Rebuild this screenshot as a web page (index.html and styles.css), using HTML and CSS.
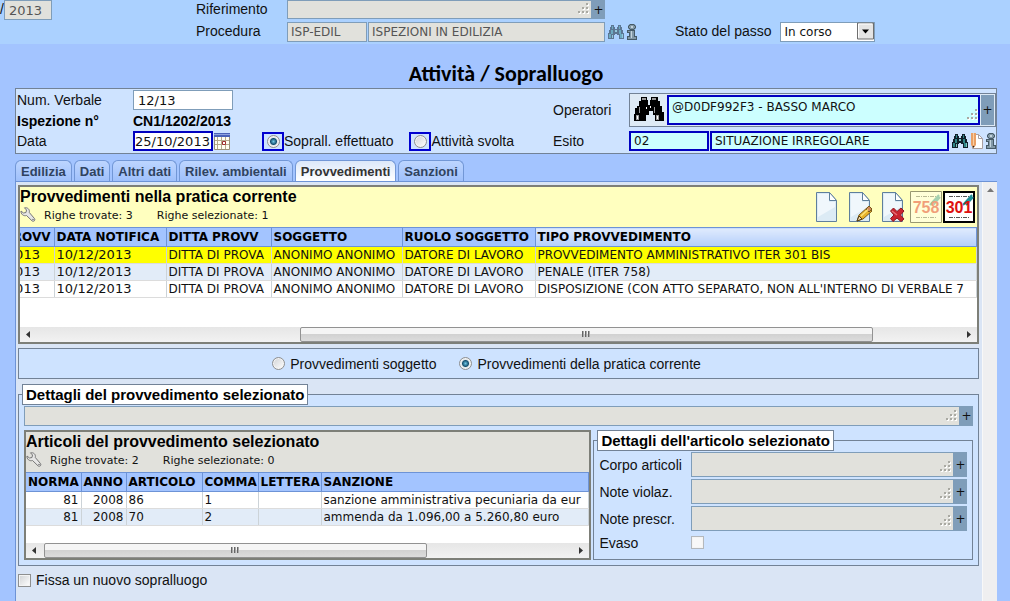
FILE: index.html
```html
<!DOCTYPE html>
<html lang="it">
<head>
<meta charset="utf-8">
<title>Attività / Sopralluogo</title>
<link rel="stylesheet" href="styles.css">
</head>
<body>
<svg class="defs" aria-hidden="true">
  <symbol id="binoculars" viewBox="0 0 16 16">
    <path d="M3 1h3v2h1v2h2V3h1V1h3v2h1v3h1v3h1v6h-5v-4H9v-1H7v1H6v4H0V9h1V6h1V3h1z" fill="#10202a"/>
    <path d="M4 2h1v3H4zM11 2h1v3h-1zM3 6h2v4H3zM11 6h2v4h-2zM1 10h2v4H1zM12 10h2v4h-2z" fill="#2f8587"/>
    <path d="M4 11h1v3H4zM14 10h1v4h-1zM7 6h2v2H7z" fill="#7dc4bf"/>
  </symbol>
  <symbol id="binoculars-big" viewBox="0 0 30 26">
    <path d="M7 0h6v3h1v5h2V3h1V0h7v4h2v5h2v6h2v9h-9v-6h-2v-4h-4v4h-3v6H0v-7h1v-6h2V9h2V4h2z" fill="#000"/>
    <path d="M8 1h4v2H8zM18 1h4v2h-4zM5 10h1v6H5zM20 10h1v6h-1zM2 18h3v5H2zM22 18h3v5h-3z" fill="#999"/>
    <path d="M3 19h1v3H3zM23 19h1v3h-1zM12 10h1v2h-1zM16 9h1v2h-1z" fill="#fff"/>
  </symbol>
  <symbol id="info" viewBox="0 0 10 16">
    <path d="M3 0h4l2 2v2L7 6h1v6h2v4H0v-4h2V9H0V6h3L1 4V2z" fill="#465a66"/>
    <path d="M3 1h4v1h1v2H7v1H3V4H2V2h1zM1 7h6v6h2v2H1v-2h2V8H1z" fill="#8298a6"/>
    <path d="M4 2h2v2H4zM4 7h1v7H4z" fill="#c3d3dc"/>
  </symbol>
  <symbol id="wrench" viewBox="0 0 16 16">
    <path d="M1 4l2.500 2L6 5.500 6.500 3 4.500.8c3-.6 5.500 1.500 4.800 4.700l5.300 6.200c1 1.500-.8 3.300-2.400 2.300L6.500 8.500C3.500 9.500.6 7 1 4z" fill="#e6e6e6" stroke="#777"/>
    <circle cx="13" cy="12.500" r=".8" fill="#777"/>
  </symbol>
  <symbol id="page" viewBox="0 0 24 32">
    <path d="M1.500 1.500h13l7 8v21h-20z" fill="#dcebf5" stroke="#5f7f9c"/>
    <path d="M3 3h11v8h6v5L3 26z" fill="#f0f7fc"/>
    <path d="M14.500 1.500v8h7z" fill="#fff" stroke="#5f7f9c"/>
  </symbol>
  <symbol id="grip" viewBox="0 0 12 12">
    <path d="M9 0h2v2H9zM5 4h2v2H5zM9 4h2v2H9zM1 8h2v2H1zM5 8h2v2H5zM9 8h2v2H9z" fill="#a9a9a2"/>
    <path d="M11 1h1v2h-2V2h1zM7 5h1v2H6V6h1zM11 5h1v2h-2V6h1zM3 9h1v2H2v-1h1zM7 9h1v2H6v-1h1zM11 9h1v2h-2v-1h1z" fill="#fff"/>
  </symbol>
  <symbol id="bars" viewBox="0 0 9 7">
    <path d="M0 0h2v6H0zM3 0h2v6H3zM6 0h2v6H6z" fill="#aaa"/>
    <path d="M0 0h1v6H0zM3 0h1v6H3zM6 0h1v6H6z" fill="#666"/>
  </symbol>
</svg>

<header class="top">
  <div class="year"><span>/</span><input class="field off num" aria-label="Anno" value="2013" readonly></div>
  <div class="top-grid">
    <label for="rif">Riferimento</label>
    <div class="memo"><textarea id="rif" class="off" readonly></textarea><svg class="grip"><use href="#grip"/></svg><button class="plus">+</button></div>
    <span></span>
    <label for="proc">Procedura</label>
    <div class="pair"><input id="proc" class="field off code" value="ISP-EDIL" readonly><input class="field off" aria-label="Descrizione procedura" value="ISPEZIONI IN EDILIZIA" readonly></div>
    <div class="icons faded"><button class="icon pale" aria-label="Cerca"><svg width="16" height="16"><use href="#binoculars"/></svg></button><button class="icon" aria-label="Info"><svg width="10" height="16"><use href="#info"/></svg></button></div>
  </div>
  <div class="step"><label for="stato">Stato del passo</label>
    <span class="select"><select id="stato"><option>In corso</option></select><svg viewBox="0 0 17 17" aria-hidden="true"><path d="M.5.500h16v16H.5z" fill="#e4e4e4" stroke="#6f6f6f"/><path d="M1.500 15V1.500H15" fill="none" stroke="#fff"/><path d="M5 7h7l-3.500 4z"/></svg></span>
  </div>
</header>

<main>
  <h1>Attività / Sopralluogo</h1>

  <section class="panel record">
    <div class="rec-left">
      <label for="num">Num. Verbale</label><input id="num" class="field num w100" value="12/13">
      <b>Ispezione n°</b><b>CN1/1202/2013</b>
      <label for="data">Data</label>
      <div class="row">
        <input id="data" class="field num must date w80" value="25/10/2013">
        <button class="icon cal" aria-label="Calendario"><svg width="16" height="17" viewBox="0 0 16 17"><path d="M.5 2.500h15v14H.5z" fill="#fffef2" stroke="#9a8f78"/><path d="M0 0h16v4H0z" fill="#4a62b8"/><path d="M0 1h16v1H0z" fill="#8fa2e0"/><path d="M3.500 4v12M7.500 4v12M11.500 4v12M1 7.500h14M1 11.500h14" stroke="#b5a98c"/><path d="M8.500 8.500h3v3h-3z" fill="#fff" stroke="#a03030"/></svg></button>
        <span class="choice first"><span class="ring"><input type="radio" name="att" id="r1" checked></span><label for="r1">Soprall. effettuato</label></span>
        <span class="choice"><span class="ring"><input type="radio" name="att" id="r2"></span><label for="r2">Attività svolta</label></span>
      </div>
    </div>
    <div class="rec-right">
      <label for="oper">Operatori</label>
      <div class="operators">
        <button class="icon" aria-label="Cerca operatori"><svg width="32" height="26"><use href="#binoculars-big"/></svg></button>
        <div class="memo tall"><textarea id="oper" class="must cyan" readonly>@D0DF992F3 - BASSO MARCO</textarea><svg class="grip"><use href="#grip"/></svg><button class="plus">+</button></div>
      </div>
      <label for="esito">Esito</label>
      <div class="row outcome">
        <input id="esito" class="field must cyan w80" value="02"><input class="field must cyan grow" aria-label="Descrizione esito" value="SITUAZIONE IRREGOLARE">
        <div class="icons"><button class="icon" aria-label="Cerca esito"><svg width="16" height="16"><use href="#binoculars"/></svg></button><button class="icon" aria-label="Modifica"><svg width="12" height="16" viewBox="0 0 12 16"><path d="M1.500 1.500h6l4 4v10h-10z" fill="#fff" stroke="#a99fa0"/><path d="M7.500 1.500v4h4" fill="none" stroke="#a99fa0"/><path d="M0 0h5v12l-2.500 3L0 12z" fill="#e9a066"/><path d="M2 0h1v12H2z" fill="#f7cfa4"/><path d="M1.500 13h2l-1 2z" fill="#222"/></svg></button><button class="icon" aria-label="Info esito"><svg width="10" height="16"><use href="#info"/></svg></button></div>
      </div>
    </div>
  </section>

  <nav class="tabs" aria-label="Sezioni">
    <button>Edilizia</button><button>Dati</button><button>Altri dati</button><button>Rilev. ambientali</button><button class="active">Provvedimenti</button><button>Sanzioni</button>
  </nav>

  <div class="sheet">
    <div class="content">
      <section class="grid">
        <div class="caption yellow">
          <div>
            <h2>Provvedimenti nella pratica corrente</h2>
            <p><svg width="16" height="16"><use href="#wrench"/></svg><span>Righe trovate: 3</span><span>Righe selezionate: 1</span></p>
          </div>
          <div class="tools">
            <button class="icon" aria-label="Nuovo"><svg width="24" height="32"><use href="#page"/></svg></button>
            <button class="icon" aria-label="Modifica"><svg width="24" height="32" viewBox="0 0 24 32"><use href="#page" width="24" height="32"/><path d="M9 30l2-6 9-8 4 4-9 8z" fill="#e8b32c" stroke="#7c5a18"/><path d="M9 30l2-5 3 3z" fill="#f5dfb0" stroke="#4f3a14"/><path d="M18 18l3-3 3 3-3 3z" fill="#d08a5c" stroke="#7c5a18"/><path d="M13 25l7-6.500" stroke="#fbe27d" stroke-width="1.500"/></svg></button>
            <button class="icon" aria-label="Elimina"><svg width="24" height="32" viewBox="0 0 24 32"><use href="#page" width="24" height="32"/><path d="M9.500 20l3-3 3.500 3.500 4-3.500 3 3-3.500 4 3.500 4-3 2.500-4-3.500-4 3.500-2.500-3 3.500-3.500z" fill="#c9232f" stroke="#8e1620"/><path d="M11 20l5 4" stroke="#e67078" stroke-width="1.500"/></svg></button>
            <button class="icon stamp dim" aria-label="Iter 758"><svg width="32" height="32" viewBox="0 0 32 32"><path d="M.5.500h31v31H.5z" fill="#fff" stroke="#000"/><path d="M6 5.500h20M6 26.500h20" stroke="#555" stroke-dasharray="4 1 1 1"/><path d="M20 14l9-10M23 14l7-8" stroke="#1f8f98" stroke-width="2"/><text x="16" y="22" text-anchor="middle" class="stamp-text">758</text></svg></button>
            <button class="icon stamp" aria-label="Iter 301"><svg width="32" height="32" viewBox="0 0 32 32"><path d="M1 1h30v30H1z" fill="#fff" stroke="#000" stroke-width="2"/><path d="M6 5.500h20M6 26.500h20" stroke="#555" stroke-dasharray="4 1 1 1"/><path d="M20 14l9-10M23 14l7-8" stroke="#1f8f98" stroke-width="2"/><text x="16" y="22" text-anchor="middle" class="stamp-text">301</text></svg></button>
          </div>
        </div>
        <div class="viewport">
          <table class="measures">
            <colgroup><col class="c-prov"><col class="c-noti"><col class="c-firm"><col class="c-subj"><col class="c-role"><col></colgroup>
            <thead><tr><th>DATA PROVV</th><th>DATA NOTIFICA</th><th>DITTA PROVV</th><th>SOGGETTO</th><th>RUOLO SOGGETTO</th><th class="sorted">TIPO PROVVEDIMENTO</th></tr></thead>
            <tbody>
              <tr class="picked"><td class="num">10/12/2013</td><td class="num">10/12/2013</td><td>DITTA DI PROVA</td><td>ANONIMO ANONIMO</td><td>DATORE DI LAVORO</td><td>PROVVEDIMENTO AMMINISTRATIVO ITER 301 BIS</td></tr>
              <tr><td class="num">10/12/2013</td><td class="num">10/12/2013</td><td>DITTA DI PROVA</td><td>ANONIMO ANONIMO</td><td>DATORE DI LAVORO</td><td>PENALE (ITER 758)</td></tr>
              <tr><td class="num">10/12/2013</td><td class="num">10/12/2013</td><td>DITTA DI PROVA</td><td>ANONIMO ANONIMO</td><td>DATORE DI LAVORO</td><td>DISPOSIZIONE (CON ATTO SEPARATO, NON ALL'INTERNO DI VERBALE 7</td></tr>
            </tbody>
          </table>
        </div>
        <div class="hbar far">
          <svg width="16" height="15" viewBox="0 0 16 15"><path d="M10 4v7L6 7.500z" fill="#333"/></svg>
          <div class="track"><span class="thumb"><svg width="9" height="7"><use href="#bars"/></svg></span></div>
          <svg width="16" height="15" viewBox="0 0 16 15"><path d="M6 4v7l4-3.500z" fill="#333"/></svg>
        </div>
      </section>

      <section class="panel scope">
        <span class="choice"><input type="radio" name="scope" id="s1"><label for="s1">Provvedimenti soggetto</label></span>
        <span class="choice"><input type="radio" name="scope" id="s2" checked><label for="s2">Provvedimenti della pratica corrente</label></span>
      </section>

      <fieldset class="details">
        <legend>Dettagli del provvedimento selezionato</legend>
        <div class="memo"><textarea class="off" aria-label="Dettagli del provvedimento" readonly></textarea><svg class="grip"><use href="#grip"/></svg><button class="plus">+</button></div>
        <div class="split">
          <section class="grid">
            <div class="caption">
              <div>
                <h2>Articoli del provvedimento selezionato</h2>
                <p class="wide"><svg width="16" height="16"><use href="#wrench"/></svg><span>Righe trovate: 2</span><span>Righe selezionate: 0</span></p>
              </div>
            </div>
            <div class="viewport">
              <table class="articles">
                <colgroup><col class="c-rule"><col class="c-year"><col class="c-art"><col class="c-comma"><col class="c-let"><col></colgroup>
                <thead><tr><th>NORMA</th><th>ANNO</th><th>ARTICOLO</th><th>COMMA</th><th>LETTERA</th><th>SANZIONE</th></tr></thead>
                <tbody>
                  <tr><td class="right">81</td><td class="right">2008</td><td>86</td><td>1</td><td></td><td>sanzione amministrativa pecuniaria da eur</td></tr>
                  <tr><td class="right">81</td><td class="right">2008</td><td>70</td><td>2</td><td></td><td>ammenda da 1.096,00 a 5.260,80 euro</td></tr>
                </tbody>
              </table>
            </div>
            <div class="hbar near">
              <svg width="16" height="15" viewBox="0 0 16 15"><path d="M10 4v7L6 7.500z" fill="#333"/></svg>
              <div class="track"><span class="thumb"><svg width="9" height="7"><use href="#bars"/></svg></span></div>
              <svg width="16" height="15" viewBox="0 0 16 15"><path d="M6 4v7l4-3.500z" fill="#333"/></svg>
            </div>
          </section>
          <fieldset class="article">
            <legend>Dettagli dell'articolo selezionato</legend>
            <div class="form">
              <label for="corpo">Corpo articoli</label><div class="memo mid"><textarea id="corpo" class="off" readonly></textarea><svg class="grip"><use href="#grip"/></svg><button class="plus">+</button></div>
              <label for="viol">Note violaz.</label><div class="memo mid"><textarea id="viol" class="off" readonly></textarea><svg class="grip"><use href="#grip"/></svg><button class="plus">+</button></div>
              <label for="presc">Note prescr.</label><div class="memo mid"><textarea id="presc" class="off" readonly></textarea><svg class="grip"><use href="#grip"/></svg><button class="plus">+</button></div>
              <label for="evaso">Evaso</label><input type="checkbox" class="pale-box" id="evaso">
            </div>
          </fieldset>
        </div>
      </fieldset>

      <div class="choice again"><input type="checkbox" id="fissa"><label for="fissa">Fissa un nuovo sopralluogo</label></div>
    </div>
    <div class="vbar" aria-hidden="true"><svg width="16" height="16" viewBox="0 0 16 16"><path d="M4 10h7L7.500 6z" fill="#777"/></svg></div>
  </div>
</main>
</body>
</html>
```
FILE: styles.css
```css
* { box-sizing: border-box; }

body {
  margin: 0;
  height: 100vh;
  overflow: hidden;
  display: flex;
  flex-direction: column;
  background: #a3c4ff;
  color: #111;
  font: 14px/18px "Liberation Sans", Arial, sans-serif;
}

.defs { position: absolute; width: 0; height: 0; }
svg { display: block; flex: none; }

button, input, textarea, select { margin: 0; color: #111; font: 12px/16px "DejaVu Sans", Verdana, sans-serif; }
.icon { display: block; padding: 0; border: 0; background: none; }

/* fields */
.field {
  height: 20px;
  min-width: 0;
  padding: 0 4px;
  border: 1px solid #7f9db9;
  border-radius: 0;
  background: #fff;
}
.field.off, textarea.off { background: #e1e1dc; color: #555; }
.field.num, td.num { font-size: 13px; }
.must { border: 2px solid #0000c0; }
.field.must { padding: 0 3px; }
.field.date { padding: 0; }
.field.cyan, textarea.cyan { background: #ccffff; }
.w80 { width: 80px; }
.w100 { width: 100px; }
.grow { flex: 1; }
.row { display: flex; align-items: center; }

.memo { position: relative; display: flex; height: 20px; }
.memo textarea {
  flex: 1;
  min-width: 0;
  padding: 2px 3px;
  border: 1px solid #7f9db9;
  resize: none;
  overflow: hidden;
}
.memo textarea.must { border: 2px solid #0000c0; }
.memo .grip { position: absolute; right: 16px; bottom: 4px; width: 12px; height: 12px; }
.plus { width: 13px; padding: 0; border: 0; background: #7f9db9; text-align: center; }
.memo.tall { flex: 1; height: 30px; gap: 1px; }
.memo.mid { height: 25px; }

/* choices */
input[type="radio"], input[type="checkbox"] {
  appearance: none;
  flex: none;
  width: 13px;
  height: 13px;
  border: 1px solid #8e8f8f;
  background: linear-gradient(135deg, #d0d2d4, #fff);
  box-shadow: inset 0 0 0 1px #f4f4f4;
}
input[type="radio"] { border-radius: 50%; }
input[type="radio"]:checked {
  background: radial-gradient(circle, #6fc7e6 0, #14506f 3px, #dfe6ea 4px);
}
input.pale-box { border-color: #b4b8bc; background: #f8f8f8; }
.choice { display: flex; align-items: center; }
.ring {
  display: grid;
  place-items: center;
  width: 22px;
  height: 19px;
  border: 2px solid #0000d0;
}

/* top strip */
.top { display: flex; height: 44px; flex: none; background: #abd1ff; }
.year { display: flex; width: 196px; }
.year span { width: 4px; line-height: 18px; }
.year .field { width: 48px; }
.top-grid {
  display: grid;
  grid-template-columns: 91px 318px 32px;
  grid-template-rows: 19px 20px;
  gap: 3px 0;
}
.top-grid .memo { height: 19px; }
.pair { display: flex; gap: 1px; }
.pair .field { flex: 1; padding: 0 3px; }
.pair .code { flex: none; width: 80px; }
.icons { display: flex; align-items: center; gap: 3px; }
.icons.faded { margin-left: 3px; }
.pale { opacity: 0.5; }
.step { display: flex; align-items: flex-start; gap: 8px; margin-left: 38px; padding-top: 21px; line-height: 20px; }
.select { position: relative; display: block; width: 95px; }
.select select {
  appearance: none;
  width: 100%;
  height: 20px;
  padding: 0 4px;
  border: 1px solid #7f9db9;
  border-radius: 0;
  background: #fff;
}
.select svg { position: absolute; top: 1px; right: 1px; width: 17px; height: 18px; pointer-events: none; }

/* main area */
main { flex: 1; min-height: 0; display: flex; flex-direction: column; padding: 0 13px 0 15px; }
h1 {
  margin: 18px 0 2px;
  text-align: center;
  color: #000;
  font: bold 22px/24px Carlito, Calibri, Lato, sans-serif;
}
.panel { border: 1px solid #728296; background: #cee3ff; }
.record { display: flex; justify-content: space-between; padding: 1px 0 2px 1px; }
.rec-left { display: grid; grid-template-columns: 116px auto; grid-template-rows: 20px 21px 20px; align-items: center; color: #111; }
.rec-left b { color: #000; }
.cal { margin-left: 1px; }
.choice.first { margin: 0 16px 0 32px; }
.rec-right {
  display: grid;
  grid-template-columns: 76px 367px;
  grid-template-rows: 34px 20px;
  row-gap: 4px;
  align-items: center;
  margin-top: 3px;
}
.operators { display: flex; align-items: center; gap: 2px; height: 34px; padding: 0 1px 0 3px; border: 1px solid #728296; background: #deeaf5; }
.outcome { gap: 1px; }
.outcome .icons { margin-left: 2px; }

/* tabs */
.tabs { display: flex; gap: 2px; margin-top: 6px; }
.tabs button {
  height: 21px;
  padding: 2px 5px 0;
  border: 1px solid #7297d6;
  border-bottom: 0;
  border-radius: 6px 6px 0 0;
  background: linear-gradient(#bdd5ff, #9fc0fb);
  color: #30435f;
  font: bold 13px/18px "Liberation Sans", Arial, sans-serif;
}
.tabs .active { background: linear-gradient(#dce8fa, #fff); color: #333; }

/* sheet */
.sheet { flex: 1; min-height: 0; display: flex; border: solid #6d93d6; border-width: 1px 0 0 1px; background: #dae5f5; }
.content { flex: 1; min-width: 0; padding: 3px 3px 0 2px; }
.vbar { width: 15px; background: #efeff0; border-left: 1px solid #f8f8f8; }

.grid { border: 2px solid #7d7f78; background: #fff; min-width: 0; }
.caption { display: flex; justify-content: space-between; height: 40px; background: #e1e1dc; }
.caption.yellow { background: #ffffbf; }
h2 { margin: 0; color: #000; font: bold 16px/20px "Liberation Sans", Arial, sans-serif; }
.caption p { display: flex; gap: 24px; margin: 0; font: 11px/18px "DejaVu Sans", Verdana, sans-serif; }
.caption svg + span { margin-left: -16px; }
.caption .wide svg + span { margin-left: -16px; }
.tools { display: flex; align-items: center; gap: 9px; padding-right: 2px; }
.tools .stamp { margin-left: -4px; }
.tools .stamp + .stamp { margin-left: -8px; }
.dim { opacity: 0.4; }
.stamp-text { fill: #dd1010; font: bold 16px "Liberation Sans", Arial, sans-serif; }

.viewport { overflow: hidden; }
table { border-collapse: collapse; table-layout: fixed; width: 100%; font: 12px/16px "DejaVu Sans", Verdana, sans-serif; }
th, td { height: 17px; padding: 0 2px; overflow: hidden; white-space: nowrap; text-align: left; border-right: 1px solid #ccd3d8; }
th { height: 19px; color: #000; background: #a3c4ff; border: solid #6d93d6; border-width: 1px 1px 1px 0; }
th.sorted { background: linear-gradient(#e0ebfd, #b4cffb); }
td { border-bottom: 1px solid #dcdcdc; line-height: 16px; }
td.right { text-align: right; }
tbody tr:nth-child(even) { background: #e2ecf8; }
tbody tr.picked { background: #ffff00; }
.measures { width: calc(100% + 57px); margin-left: -57px; }
.c-prov { width: 91px; }
.c-noti { width: 112px; }
.c-firm { width: 105px; }
.c-subj { width: 131px; }
.c-role { width: 133px; }
.c-rule { width: 55px; }
.c-year { width: 45px; }
.c-art { width: 76px; }
.c-comma { width: 56px; }
.c-let { width: 63px; }

.hbar { display: flex; background: linear-gradient(#e6e6e6, #f2f2f2); }
.far { margin-top: 29px; }
.near { margin-top: 17px; }
.track { flex: 1; display: flex; }
.thumb { display: grid; place-items: center; height: 15px; border: 1px solid #929292; border-radius: 2px; background: linear-gradient(#f5f5f5 45%, #d2d2d2 50%, #dcdcdc); }
.far .thumb { width: 62%; margin-left: 28.500%; }
.near .thumb { width: 72%; margin-left: 2px; }

.scope { display: flex; justify-content: center; gap: 23px; height: 31px; margin-top: 4px; padding-right: 24px; }
.scope .choice { gap: 5px; }

/* details */
fieldset { min-width: 0; margin: 0; border: 1px solid #728296; background: #cee3ff; }
legend { height: 21px; padding: 0 3px; border: 1px solid #728296; background: #fff; color: #000; font: bold 15px/19px "Liberation Sans", Arial, sans-serif; }
.details { margin-top: 5px; padding: 1px 5px 5px 3px; }
.details > .memo { margin-left: 2px; }
.split { display: grid; grid-template-columns: 568fr 380fr; gap: 2px; margin: 4px 0 0 2px; }
.article { padding: 1px 5px 0 3px; }
.form { display: grid; grid-template-columns: 92px 1fr; row-gap: 2px; align-items: center; padding-left: 2px; }
.form .pale-box { margin: 3px 0; }
.again { gap: 5px; margin-top: 5px; }
```
